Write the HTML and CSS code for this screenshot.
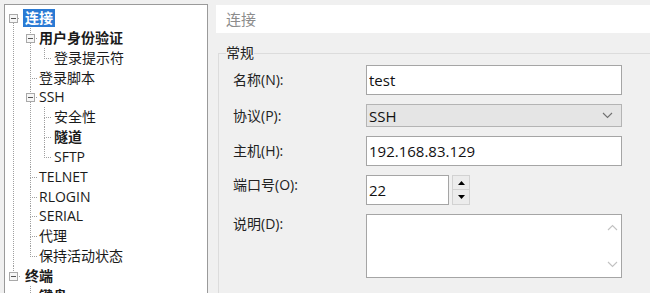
FILE: index.html
```html
<!DOCTYPE html>
<html lang="zh-CN">
<head>
  <meta charset="UTF-8" />
  <title>会话属性 - 连接</title>
  <link rel="stylesheet" href="styles.css">
</head>
<body>

<div class="window">

  <!-- 类别树 -->
  <div class="tree-panel">
    <ul class="tree">
      <li>
        <div class="item"><span class="box"></span><span class="label selected">连接</span></div>
        <ul>
          <li>
            <div class="item"><span class="box"></span><span class="label bold">用户身份验证</span></div>
            <ul>
              <li><div class="item"><span class="label">登录提示符</span></div></li>
            </ul>
          </li>
          <li><div class="item"><span class="label">登录脚本</span></div></li>
          <li>
            <div class="item"><span class="box"></span><span class="label">SSH</span></div>
            <ul>
              <li><div class="item"><span class="label">安全性</span></div></li>
              <li><div class="item"><span class="label bold">隧道</span></div></li>
              <li><div class="item"><span class="label">SFTP</span></div></li>
            </ul>
          </li>
          <li><div class="item"><span class="label">TELNET</span></div></li>
          <li><div class="item"><span class="label">RLOGIN</span></div></li>
          <li><div class="item"><span class="label">SERIAL</span></div></li>
          <li><div class="item"><span class="label">代理</span></div></li>
          <li><div class="item"><span class="label">保持活动状态</span></div></li>
        </ul>
      </li>
      <li>
        <div class="item"><span class="box"></span><span class="label bold">终端</span></div>
        <ul>
          <li><div class="item"><span class="label bold">键盘</span></div></li>
          <li><div class="item"><span class="label">VT 模式</span></div></li>
          <li><div class="item"><span class="label">高级</span></div></li>
        </ul>
      </li>
    </ul>
  </div>

  <!-- 属性页 -->
  <div class="pane">
    <div class="page-title">连接</div>

    <fieldset class="group">
      <legend>常规</legend>
      <div class="form">
        <div class="row">
          <label class="row-label">名称(N):</label>
          <input class="field" type="text" value="test">
        </div>
        <div class="row">
          <label class="row-label">协议(P):</label>
          <div class="select">
            <span>SSH</span>
            <svg width="11" height="7" viewBox="0 0 11 7"><path d="M1 1 L5.5 5.5 L10 1" fill="none" stroke="#707070" stroke-width="1.1"/></svg>
          </div>
        </div>
        <div class="row">
          <label class="row-label">主机(H):</label>
          <input class="field" type="text" value="192.168.83.129">
        </div>
        <div class="row top">
          <label class="row-label">端口号(O):</label>
          <div class="port">
            <input class="field short" type="text" value="22">
            <div class="spin">
              <div class="spin-btn"><svg width="7" height="4" viewBox="0 0 7 4"><path d="M0 4 L3.5 0 L7 4 Z" fill="#000"/></svg></div>
              <div class="spin-btn"><svg width="7" height="4" viewBox="0 0 7 4"><path d="M0 0 L3.5 4 L7 0 Z" fill="#000"/></svg></div>
            </div>
          </div>
        </div>
        <div class="row top">
          <label class="row-label">说明(D):</label>
          <div class="memo">
            <div class="memo-text"></div>
            <div class="memo-scroll">
              <svg width="11" height="7" viewBox="0 0 11 7"><path d="M1 6 L5.5 1.5 L10 6" fill="none" stroke="#c2c2c2" stroke-width="1.1"/></svg>
              <svg width="11" height="7" viewBox="0 0 11 7"><path d="M1 1 L5.5 5.5 L10 1" fill="none" stroke="#c2c2c2" stroke-width="1.1"/></svg>
            </div>
          </div>
        </div>
      </div>
    </fieldset>
  </div>

</div>

</body>
</html>
```

FILE: styles.css
```css
html, body { margin: 0; height: 100%; overflow: hidden; }
body { background: #f0f0f0; font-family: "Open Sans", "Noto Sans CJK SC", sans-serif; color: #1a1a1a; }

.window { display: flex; padding: 4px 0 0 4px; }

/* 类别树 */
.tree-panel { flex: 0 0 204px; box-sizing: border-box; height: 320px; background: #fff; border: 1px solid #9a9a9a; }
.tree, .tree ul { list-style: none; margin: 0; }
.tree { padding: 3px 0 0 8px; }
.tree li { position: relative; padding-left: 10px; }
.tree ul { padding-left: 7px; }
.tree ul li { padding-left: 7px; }
.tree ul ul li { padding-left: 8px; }

.tree li::before { content: ''; position: absolute; left: 0; top: 0; width: 6px; height: 10px; border-left: 1px dotted #a0a0a0; border-bottom: 1px dotted #a0a0a0; }
.tree li::after { content: ''; position: absolute; left: 0; top: 10px; bottom: 0; border-left: 1px dotted #a0a0a0; }
.tree li:last-child::after { display: none; }
.tree > li:first-child::before { border-left: none; }

.item { height: 19.85px; font-size: 14px; white-space: nowrap; }
.label { display: inline-block; padding: 0 2px; margin-top: 1px; line-height: 18px; }
.label.bold { font-weight: bold; }
.label.selected { background: #2a7ad4; color: #fff; font-weight: bold; }

.box { position: absolute; left: -4px; top: 6px; width: 9px; height: 9px; box-sizing: border-box; border: 1px solid #a9a9a9; background: #f6f6f6; z-index: 1; }
.box::after { content: ''; position: absolute; left: 1px; top: 3px; width: 5px; height: 1px; background: #555; }

/* 属性页 */
.pane { flex: 0 0 470px; margin-left: 8px; }
.page-title { margin-top: 1px; height: 28px; line-height: 28px; padding-left: 10px; background: #fff; color: #8c8c8c; font-size: 15px; }

.group { margin: 10px 0 0 2px; padding: 0 0 40px 7px; border: 1px solid #dcdcdc; }
.group legend { padding: 0; font-size: 14px; line-height: 20px; color: #222; }

.form { display: flex; flex-direction: column; gap: 9px; padding: 2px 0 0 7px; }
.row { display: flex; align-items: center; }
.row.top { align-items: flex-start; }
.row-label { width: 133px; flex: 0 0 133px; font-size: 14px; line-height: 20px; color: #222; }

.field { width: 256px; height: 30px; box-sizing: border-box; margin: 0; padding: 0 2px; border: 1px solid #a5a5a5; background: #fff; font-family: "Open Sans", "Noto Sans CJK SC", sans-serif; font-size: 15px; color: #111; outline: none; }
.field.short { width: 83px; }

.select { width: 256px; height: 23px; box-sizing: border-box; display: flex; align-items: center; justify-content: space-between; padding: 0 8px 0 2px; background: #e5e5e5; border: 1px solid #b4b4b4; font-size: 15px; color: #111; }

.port { display: flex; gap: 3px; }
.spin { display: flex; flex-direction: column; }
.spin-btn { width: 18px; height: 15px; box-sizing: border-box; display: flex; align-items: center; justify-content: center; background: #ececec; border: 1px solid #d2d2d2; }
.spin-btn + .spin-btn { border-top: none; }

.memo { width: 256px; height: 64px; box-sizing: border-box; display: flex; background: #fff; border: 1px solid #a5a5a5; }
.memo-text { flex: 1; }
.memo-scroll { width: 17px; display: flex; flex-direction: column; justify-content: space-between; align-items: center; padding: 9px 0 9px; box-sizing: border-box; }
```
